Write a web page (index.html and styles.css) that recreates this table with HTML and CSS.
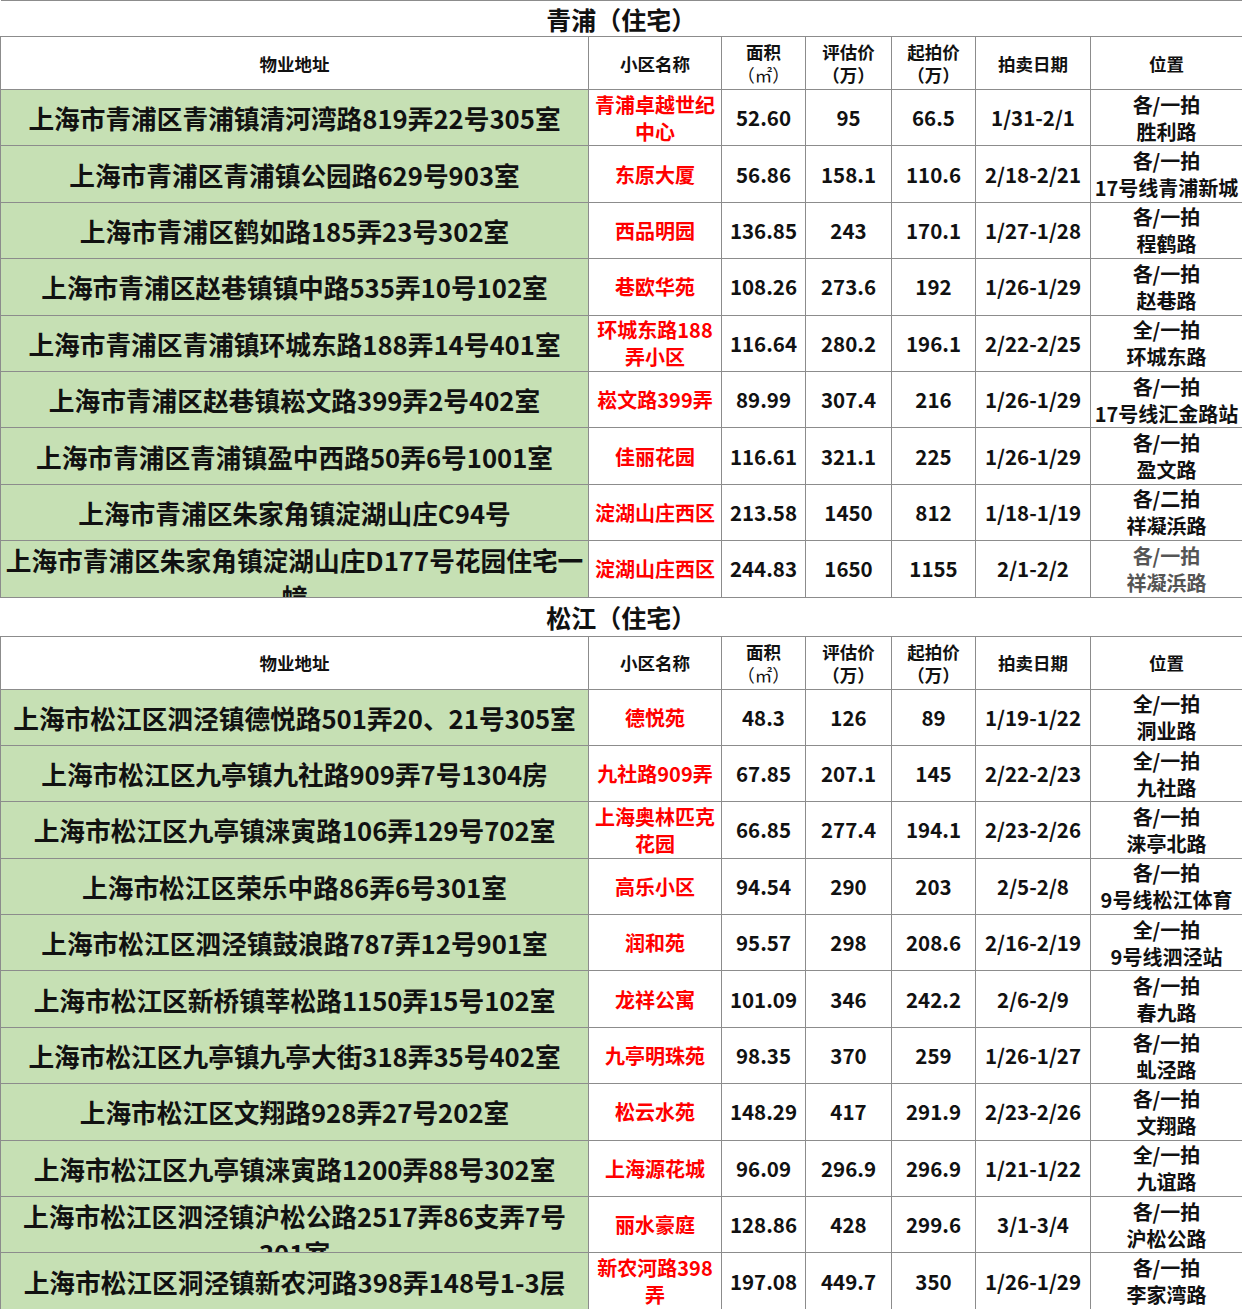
FILE: index.html
```html
<!DOCTYPE html>
<html lang="zh-CN">
<head>
<meta charset="utf-8">
<title>法拍房</title>
<link rel="stylesheet" href="styles.css">
</head>
<body>
<table class="sheet">
  <colgroup>
    <col class="w-addr"><col class="w-name"><col class="w-area"><col class="w-eval"><col class="w-start"><col class="w-date"><col class="w-pos">
  </colgroup>
  <tbody>
    <tr class="title-row"><td colspan="7" class="title"><div class="c ct">青浦（住宅）</div></td></tr>
    <tr class="head-row">
      <td><div class="c ch">物业地址</div></td>
      <td><div class="c ch">小区名称</div></td>
      <td><div class="c ch"><span>面积<br><span class="unit">（㎡）</span></span></div></td>
      <td><div class="c ch"><span>评估价<br>（万）</span></div></td>
      <td><div class="c ch"><span>起拍价<br>（万）</span></div></td>
      <td><div class="c ch">拍卖日期</div></td>
      <td><div class="c ch">位置</div></td>
    </tr>
    <tr><td class="addr"><div class="c ca">上海市青浦区青浦镇清河湾路819弄22号305室</div></td><td class="name"><div class="c cn">青浦卓越世纪中心</div></td><td class="num"><div class="c">52.60</div></td><td class="num"><div class="c">95</div></td><td class="num"><div class="c">66.5</div></td><td class="num"><div class="c">1/31-2/1</div></td><td class="pos"><div class="c cp">各/一拍<br>胜利路</div></td></tr>
    <tr><td class="addr"><div class="c ca">上海市青浦区青浦镇公园路629号903室</div></td><td class="name"><div class="c cn">东原大厦</div></td><td class="num"><div class="c">56.86</div></td><td class="num"><div class="c">158.1</div></td><td class="num"><div class="c">110.6</div></td><td class="num"><div class="c">2/18-2/21</div></td><td class="pos"><div class="c cp">各/一拍<br>17号线青浦新城</div></td></tr>
    <tr><td class="addr"><div class="c ca">上海市青浦区鹤如路185弄23号302室</div></td><td class="name"><div class="c cn">西品明园</div></td><td class="num"><div class="c">136.85</div></td><td class="num"><div class="c">243</div></td><td class="num"><div class="c">170.1</div></td><td class="num"><div class="c">1/27-1/28</div></td><td class="pos"><div class="c cp">各/一拍<br>程鹤路</div></td></tr>
    <tr><td class="addr"><div class="c ca">上海市青浦区赵巷镇镇中路535弄10号102室</div></td><td class="name"><div class="c cn">巷欧华苑</div></td><td class="num"><div class="c">108.26</div></td><td class="num"><div class="c">273.6</div></td><td class="num"><div class="c">192</div></td><td class="num"><div class="c">1/26-1/29</div></td><td class="pos"><div class="c cp">各/一拍<br>赵巷路</div></td></tr>
    <tr><td class="addr"><div class="c ca">上海市青浦区青浦镇环城东路188弄14号401室</div></td><td class="name"><div class="c cn">环城东路188弄小区</div></td><td class="num"><div class="c">116.64</div></td><td class="num"><div class="c">280.2</div></td><td class="num"><div class="c">196.1</div></td><td class="num"><div class="c">2/22-2/25</div></td><td class="pos"><div class="c cp">全/一拍<br>环城东路</div></td></tr>
    <tr><td class="addr"><div class="c ca">上海市青浦区赵巷镇崧文路399弄2号402室</div></td><td class="name"><div class="c cn">崧文路399弄</div></td><td class="num"><div class="c">89.99</div></td><td class="num"><div class="c">307.4</div></td><td class="num"><div class="c">216</div></td><td class="num"><div class="c">1/26-1/29</div></td><td class="pos"><div class="c cp">各/一拍<br>17号线汇金路站</div></td></tr>
    <tr><td class="addr"><div class="c ca">上海市青浦区青浦镇盈中西路50弄6号1001室</div></td><td class="name"><div class="c cn">佳丽花园</div></td><td class="num"><div class="c">116.61</div></td><td class="num"><div class="c">321.1</div></td><td class="num"><div class="c">225</div></td><td class="num"><div class="c">1/26-1/29</div></td><td class="pos"><div class="c cp">各/一拍<br>盈文路</div></td></tr>
    <tr><td class="addr"><div class="c ca">上海市青浦区朱家角镇淀湖山庄C94号</div></td><td class="name"><div class="c cn">淀湖山庄西区</div></td><td class="num"><div class="c">213.58</div></td><td class="num"><div class="c">1450</div></td><td class="num"><div class="c">812</div></td><td class="num"><div class="c">1/18-1/19</div></td><td class="pos"><div class="c cp">各/二拍<br>祥凝浜路</div></td></tr>
    <tr><td class="addr"><div class="c ca">上海市青浦区朱家角镇淀湖山庄D177号花园住宅一幢</div></td><td class="name"><div class="c cn">淀湖山庄西区</div></td><td class="num"><div class="c">244.83</div></td><td class="num"><div class="c">1650</div></td><td class="num"><div class="c">1155</div></td><td class="num"><div class="c">2/1-2/2</div></td><td class="pos"><div class="c cp faded">各/一拍<br>祥凝浜路</div></td></tr>

    <tr class="title-row"><td colspan="7" class="title"><div class="c ct ct2">松江（住宅）</div></td></tr>
    <tr class="head-row">
      <td><div class="c ch">物业地址</div></td>
      <td><div class="c ch">小区名称</div></td>
      <td><div class="c ch"><span>面积<br><span class="unit">（㎡）</span></span></div></td>
      <td><div class="c ch"><span>评估价<br>（万）</span></div></td>
      <td><div class="c ch"><span>起拍价<br>（万）</span></div></td>
      <td><div class="c ch">拍卖日期</div></td>
      <td><div class="c ch">位置</div></td>
    </tr>
    <tr><td class="addr"><div class="c ca">上海市松江区泗泾镇德悦路501弄20、21号305室</div></td><td class="name"><div class="c cn">德悦苑</div></td><td class="num"><div class="c">48.3</div></td><td class="num"><div class="c">126</div></td><td class="num"><div class="c">89</div></td><td class="num"><div class="c">1/19-1/22</div></td><td class="pos"><div class="c cp">全/一拍<br>洞业路</div></td></tr>
    <tr><td class="addr"><div class="c ca">上海市松江区九亭镇九社路909弄7号1304房</div></td><td class="name"><div class="c cn">九社路909弄</div></td><td class="num"><div class="c">67.85</div></td><td class="num"><div class="c">207.1</div></td><td class="num"><div class="c">145</div></td><td class="num"><div class="c">2/22-2/23</div></td><td class="pos"><div class="c cp">全/一拍<br>九社路</div></td></tr>
    <tr><td class="addr"><div class="c ca">上海市松江区九亭镇涞寅路106弄129号702室</div></td><td class="name"><div class="c cn">上海奥林匹克花园</div></td><td class="num"><div class="c">66.85</div></td><td class="num"><div class="c">277.4</div></td><td class="num"><div class="c">194.1</div></td><td class="num"><div class="c">2/23-2/26</div></td><td class="pos"><div class="c cp">各/一拍<br>涞亭北路</div></td></tr>
    <tr><td class="addr"><div class="c ca">上海市松江区荣乐中路86弄6号301室</div></td><td class="name"><div class="c cn">高乐小区</div></td><td class="num"><div class="c">94.54</div></td><td class="num"><div class="c">290</div></td><td class="num"><div class="c">203</div></td><td class="num"><div class="c">2/5-2/8</div></td><td class="pos"><div class="c cp">各/一拍<br>9号线松江体育</div></td></tr>
    <tr><td class="addr"><div class="c ca">上海市松江区泗泾镇鼓浪路787弄12号901室</div></td><td class="name"><div class="c cn">润和苑</div></td><td class="num"><div class="c">95.57</div></td><td class="num"><div class="c">298</div></td><td class="num"><div class="c">208.6</div></td><td class="num"><div class="c">2/16-2/19</div></td><td class="pos"><div class="c cp">全/一拍<br>9号线泗泾站</div></td></tr>
    <tr><td class="addr"><div class="c ca">上海市松江区新桥镇莘松路1150弄15号102室</div></td><td class="name"><div class="c cn">龙祥公寓</div></td><td class="num"><div class="c">101.09</div></td><td class="num"><div class="c">346</div></td><td class="num"><div class="c">242.2</div></td><td class="num"><div class="c">2/6-2/9</div></td><td class="pos"><div class="c cp">各/一拍<br>春九路</div></td></tr>
    <tr><td class="addr"><div class="c ca">上海市松江区九亭镇九亭大街318弄35号402室</div></td><td class="name"><div class="c cn">九亭明珠苑</div></td><td class="num"><div class="c">98.35</div></td><td class="num"><div class="c">370</div></td><td class="num"><div class="c">259</div></td><td class="num"><div class="c">1/26-1/27</div></td><td class="pos"><div class="c cp">各/一拍<br>虬泾路</div></td></tr>
    <tr><td class="addr"><div class="c ca">上海市松江区文翔路928弄27号202室</div></td><td class="name"><div class="c cn">松云水苑</div></td><td class="num"><div class="c">148.29</div></td><td class="num"><div class="c">417</div></td><td class="num"><div class="c">291.9</div></td><td class="num"><div class="c">2/23-2/26</div></td><td class="pos"><div class="c cp">各/一拍<br>文翔路</div></td></tr>
    <tr><td class="addr"><div class="c ca">上海市松江区九亭镇涞寅路1200弄88号302室</div></td><td class="name"><div class="c cn">上海源花城</div></td><td class="num"><div class="c">96.09</div></td><td class="num"><div class="c">296.9</div></td><td class="num"><div class="c">296.9</div></td><td class="num"><div class="c">1/21-1/22</div></td><td class="pos"><div class="c cp">全/一拍<br>九谊路</div></td></tr>
    <tr><td class="addr"><div class="c ca"><span>上海市松江区泗泾镇沪松公路2517弄86支弄7号<span class="nw">301室</span></span></div></td><td class="name"><div class="c cn">丽水豪庭</div></td><td class="num"><div class="c">128.86</div></td><td class="num"><div class="c">428</div></td><td class="num"><div class="c">299.6</div></td><td class="num"><div class="c">3/1-3/4</div></td><td class="pos"><div class="c cp">各/一拍<br>沪松公路</div></td></tr>
    <tr><td class="addr"><div class="c ca">上海市松江区洞泾镇新农河路398弄148号1-3层</div></td><td class="name"><div class="c cn">新农河路398弄</div></td><td class="num"><div class="c">197.08</div></td><td class="num"><div class="c">449.7</div></td><td class="num"><div class="c">350</div></td><td class="num"><div class="c">1/26-1/29</div></td><td class="pos"><div class="c cp">各/一拍<br>李家湾路</div></td></tr>
  </tbody>
</table>
</body>
</html>
```
FILE: styles.css
```css
html, body {
  margin: 0;
  padding: 0;
  background: #ffffff;
}

body {
  font-family: "Noto Sans CJK SC", "Noto Sans", sans-serif;
  color: #111111;
}

.sheet {
  border-collapse: collapse;
  table-layout: fixed;
  width: 1242px;
}

.w-addr { width: 588px; }
.w-name { width: 133px; }
.w-area { width: 84px; }
.w-eval { width: 86px; }
.w-start { width: 84px; }
.w-date { width: 115px; }
.w-pos { width: 152px; }

.sheet td {
  border: 1px solid #8c8c8c;
  padding: 0;
  text-align: center;
  font-weight: 700;
  vertical-align: top;
}

.c {
  display: flex;
  align-items: safe center;
  justify-content: center;
  overflow: hidden;
  height: 55.4px;
  font-size: 20.5px;
  line-height: 27px;
  text-align: center;
}

.sheet td.title {
  border-left: none;
}

.ct {
  height: 35px;
  font-size: 25px;
  line-height: 30px;
}

.ct2 {
  height: 38px;
}

.ch {
  height: 52px;
  font-size: 17.5px;
  line-height: 23px;
}

.unit {
  font-weight: 400;
}

.addr {
  background: #c6e0b4;
}

.ca {
  font-size: 25.7px;
  line-height: 37px;
  padding: 0 1px;
}

.nw {
  white-space: nowrap;
}

.name {
  color: #ff0000;
}

.cn {
  font-size: 20px;
  line-height: 27px;
  padding: 0 4px;
}

.cp {
  font-size: 20px;
  line-height: 27px;
  padding: 0 2px;
}

.faded {
  color: #555555;
}
```
